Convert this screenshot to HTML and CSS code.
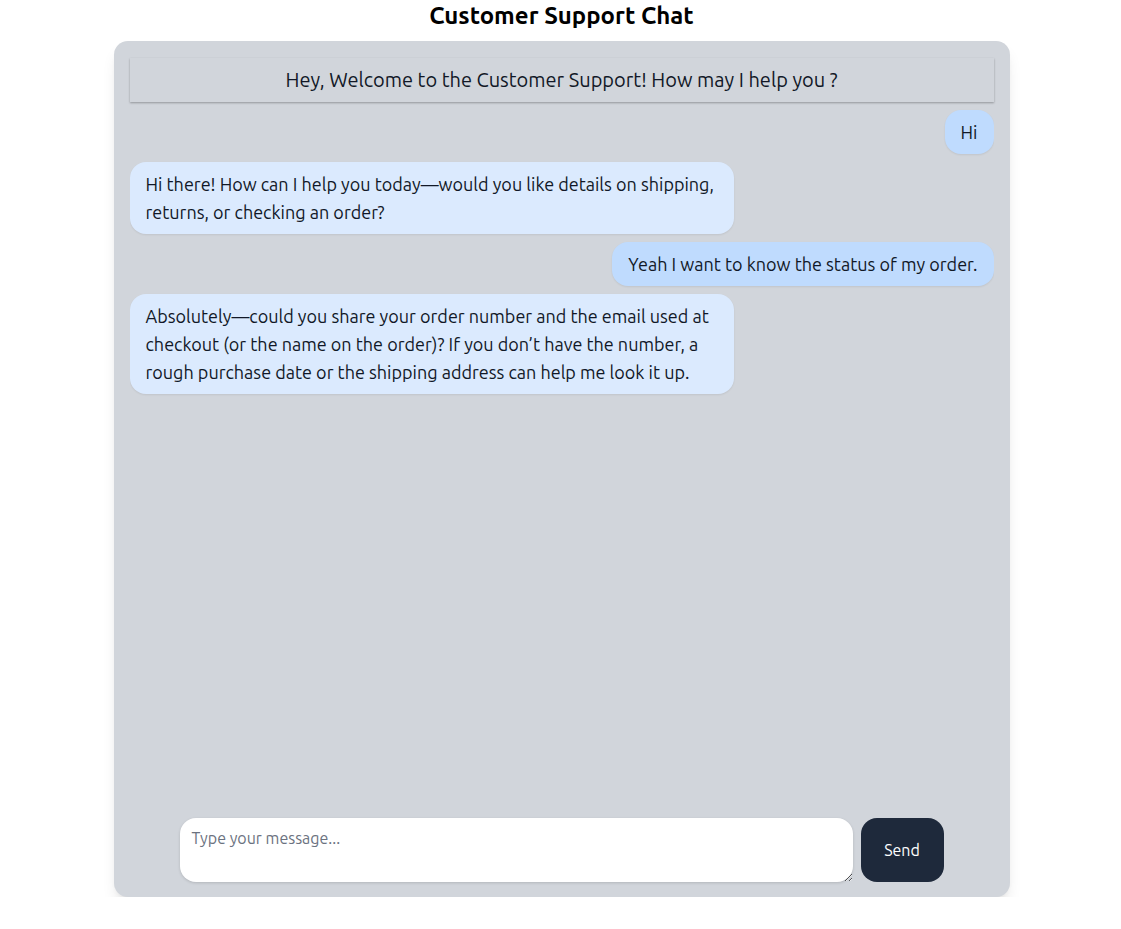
FILE: index.html
```html
<!DOCTYPE html>
<html lang="en">
<head>
    <meta charset="UTF-8">
    <meta name="viewport" content="width=device-width, initial-scale=1.0">
    <title>Customer Support Chat</title>
    <link rel="stylesheet" href="styles.css">
</head>
<body>

    <!-- Título da página -->
    <h1 class="title">Customer Support Chat</h1>

    <!-- Caixa principal do chat -->
    <div class="chat">
        <div class="chat-header">Hey, Welcome to the Customer Support! How may I help you ?</div>

        <div class="messages">
            <div class="msg user">Hi</div>
            <div class="msg bot">Hi there! How can I help you today—would you like details on shipping, returns, or checking an order?</div>
            <div class="msg user">Yeah I want to know the status of my order.</div>
            <div class="msg bot">Absolutely—could you share your order number and the email used at checkout (or the name on the order)? If you don’t have the number, a rough purchase date or the shipping address can help me look it up.</div>
        </div>

        <!-- Campo de envio -->
        <form class="composer">
            <textarea class="composer-input" rows="2" placeholder="Type your message..."></textarea>
            <button type="button" class="send-button">Send</button>
        </form>
    </div>

</body>
</html>
```

FILE: styles.css
```css
* {
    box-sizing: border-box;
    margin: 0;
    padding: 0;
}

body {
    padding-left: 2px;
    background-color: #ffffff;
    font-family: "Ubuntu", "Noto Sans", "Open Sans", sans-serif;
    color: #111827;
}

.title {
    text-align: center;
    font-size: 24px;
    line-height: 32px;
    font-weight: 700;
    color: #000;
    margin-bottom: 9px;
}

/* caixa cinza do chat */
.chat {
    display: flex;
    flex-direction: column;
    width: 896px;
    height: 856px;
    margin: 0 auto;
    padding: 17px 16px 15px;
    background-color: #d1d5db;
    border-radius: 14px;
    box-shadow: 0 10px 15px -3px rgba(0, 0, 0, 0.1), 0 4px 6px -4px rgba(0, 0, 0, 0.1);
}

.chat-header {
    padding: 8px 16px;
    font-size: 20px;
    line-height: 28px;
    text-align: center;
    background-color: #d1d5db;
    box-shadow: 0 1px 2px rgba(0, 0, 0, 0.3);
}

.messages {
    flex: 1;
    display: flex;
    flex-direction: column;
    gap: 8px;
    padding-top: 8px;
    overflow-y: auto;
}

.msg {
    max-width: 70%;
    padding: 8px 16px;
    font-size: 18px;
    line-height: 28px;
    border-radius: 16px;
    box-shadow: 0 1px 2px rgba(0, 0, 0, 0.08);
}

.msg.user {
    align-self: flex-end;
    background-color: #bfdbfe;
}

.msg.bot {
    align-self: flex-start;
    background-color: #dbeafe;
}

/* linha do campo de texto + botão */
.composer {
    display: flex;
    gap: 8px;
    width: 764px;
    margin: 0 auto;
}

.composer-input {
    flex: 1;
    height: 64px;
    padding: 8px 12px;
    font-family: inherit;
    font-size: 16px;
    line-height: 24px;
    border: none;
    border-radius: 16px;
    background-color: #ffffff;
    box-shadow: 0 1px 3px rgba(0, 0, 0, 0.15);
    outline: none;
}

.composer-input::placeholder {
    color: #6b7280;
}

.send-button {
    width: 83px;
    height: 64px;
    font-family: inherit;
    font-size: 16px;
    color: #ffffff;
    background-color: #1e293b;
    border: none;
    border-radius: 16px;
    cursor: pointer;
}
```
